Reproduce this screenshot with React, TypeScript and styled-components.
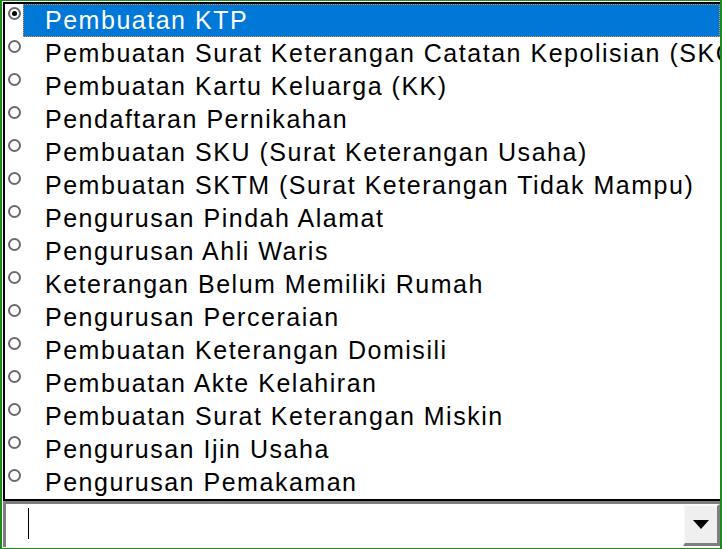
import React, { useState } from "react";
import styled, { createGlobalStyle } from "styled-components";

const GlobalStyle = createGlobalStyle`
  html, body {
    margin: 0;
    padding: 0;
    background: #ffffff;
  }
`;

const Frame = styled.div`
  box-sizing: border-box;
  width: 722px;
  height: 549px;
  border-style: solid;
  border-color: #1e8a1e;
  border-width: 1px 2px 1px 2px;
  padding: 1px 0 0 1px;
  display: flex;
  flex-direction: column;
  overflow: hidden;
  background: #ffffff;
  font-family: "Liberation Sans", Arial, sans-serif;
`;

const ListBox = styled.div`
  box-sizing: border-box;
  height: 499px;
  border-style: solid;
  border-color: #000000;
  border-width: 2px 0 2px 2px;
  overflow: hidden;
  display: flex;
  flex-direction: column;
`;

const Row = styled.div`
  display: flex;
  height: 33px;
  flex: 0 0 33px;
  cursor: default;
`;

const RadioCell = styled.div`
  flex: 0 0 18px;
  display: flex;
  justify-content: center;
  padding-top: 3px;
`;

const Radio = styled.span<{ $checked: boolean }>`
  box-sizing: border-box;
  width: 13px;
  height: 13px;
  border-radius: 50%;
  border: 2px solid #6a6a6a;
  background: #ffffff;
  display: flex;
  align-items: center;
  justify-content: center;

  &::after {
    content: "";
    width: 5px;
    height: 5px;
    border-radius: 50%;
    background: ${(p) => (p.$checked ? "#000000" : "transparent")};
  }
`;

const Label = styled.div<{ $selected: boolean }>`
  box-sizing: border-box;
  flex: 1;
  height: 33px;
  padding-left: 22px;
  font-size: 25px;
  letter-spacing: 1.52px;
  line-height: 33px;
  white-space: nowrap;
  color: ${(p) => (p.$selected ? "#ffffff" : "#000000")};
  background: ${(p) => (p.$selected ? "#0078d7" : "transparent")};
  outline: ${(p) => (p.$selected ? "1px dotted #f0902a" : "none")};
  outline-offset: -1px;
`;

const Combo = styled.div`
  box-sizing: border-box;
  height: 46px;
  display: flex;
  border-top: 3px solid #7d7d7d;
  border-left: 3px solid #7d7d7d;
`;

const Input = styled.div`
  flex: 1;
  display: flex;
  align-items: flex-start;
  padding: 4px 0 0 22px;
`;

const Caret = styled.span`
  width: 1px;
  height: 31px;
  background: #000000;
`;

const DropButton = styled.button`
  box-sizing: border-box;
  width: 37px;
  height: 42px;
  margin: 0;
  padding: 0;
  border-style: solid;
  border-width: 2px 3px 3px 2px;
  border-color: #fbfbfb #7f7f7f #7f7f7f #fbfbfb;
  background: #efefef;
  display: flex;
  align-items: center;
  justify-content: center;
`;

const items = [
  "Pembuatan KTP",
  "Pembuatan Surat Keterangan Catatan Kepolisian (SKCK)",
  "Pembuatan Kartu Keluarga (KK)",
  "Pendaftaran Pernikahan",
  "Pembuatan SKU (Surat Keterangan Usaha)",
  "Pembuatan SKTM (Surat Keterangan Tidak Mampu)",
  "Pengurusan Pindah Alamat",
  "Pengurusan Ahli Waris",
  "Keterangan Belum Memiliki Rumah",
  "Pengurusan Perceraian",
  "Pembuatan Keterangan Domisili",
  "Pembuatan Akte Kelahiran",
  "Pembuatan Surat Keterangan Miskin",
  "Pengurusan Ijin Usaha",
  "Pengurusan Pemakaman",
];

export default function App() {
  const [selected, setSelected] = useState(0);

  return (
    <>
      <GlobalStyle />
      <Frame>
        <ListBox>
          {items.map((item, idx) => (
            <Row key={idx} onClick={() => setSelected(idx)}>
              <RadioCell>
                <Radio $checked={idx === selected} />
              </RadioCell>
              <Label $selected={idx === selected}>{item}</Label>
            </Row>
          ))}
        </ListBox>
        <Combo>
          <Input>
            <Caret />
          </Input>
          <DropButton>
            <svg width="16" height="9" viewBox="0 0 16 9">
              <polygon points="0,0 16,0 8,9" fill="#000000" />
            </svg>
          </DropButton>
        </Combo>
      </Frame>
    </>
  );
}
